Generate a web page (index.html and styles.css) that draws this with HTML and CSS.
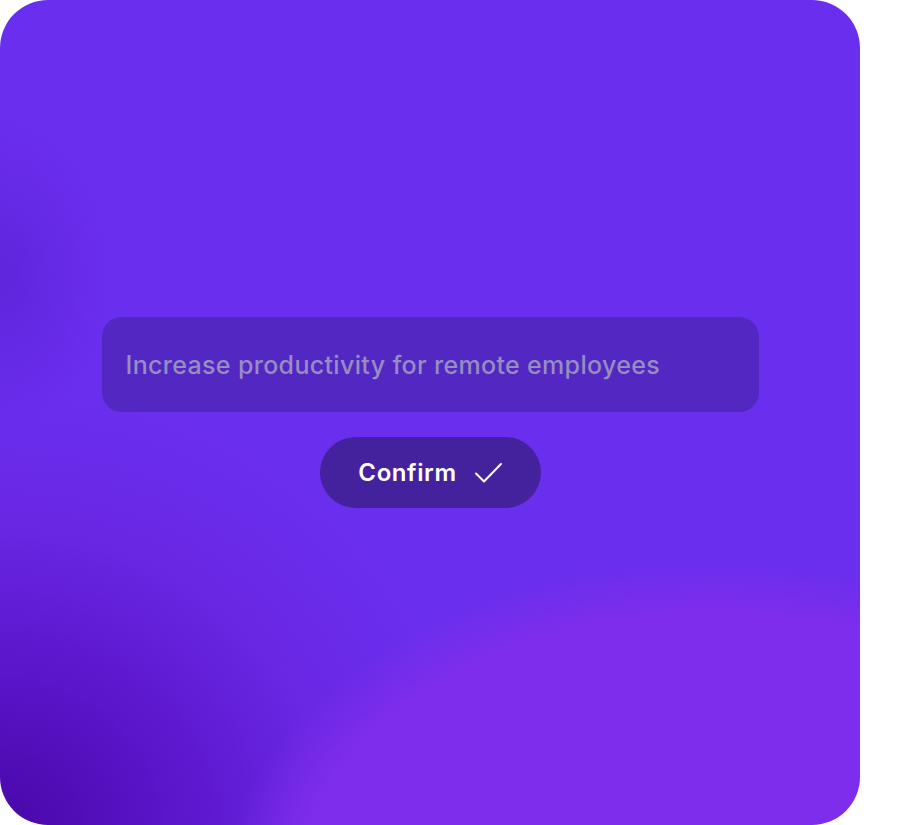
FILE: index.html
```html
<!DOCTYPE html>
<html lang="en">
<head>
<meta charset="utf-8">
<title>Goal</title>
<link rel="stylesheet" href="styles.css">
</head>
<body>
<main class="card">
  <div class="stack">
    <div class="field"><span class="placeholder">Increase productivity for remote employees</span></div>
    <button class="confirm" type="button">
      <span class="confirm-label">Confirm</span>
      <svg class="check" width="30" height="24" viewBox="0 0 30 24" fill="none" aria-hidden="true">
        <path d="M2 12.5 L10 20.5 L27 3" stroke="#ffffff" stroke-width="2" stroke-linecap="round" stroke-linejoin="round"/>
      </svg>
    </button>
  </div>
</main>
</body>
</html>
```
FILE: styles.css
```css
html, body {
  margin: 0;
  padding: 0;
  background: #ffffff;
}
body {
  width: 909px;
  height: 825px;
  font-family: "Inter", "Noto Sans", sans-serif;
}
.card {
  width: 860px;
  height: 825px;
  border-radius: 48px;
  overflow: hidden;
  display: flex;
  align-items: center;
  justify-content: center;
  background:
    radial-gradient(ellipse 490px 345px at 710px 905px, #7f2dec 0%, #7f2dec 84%, rgba(127, 45, 236, 0) 100%),
    radial-gradient(ellipse 470px 440px at 0px 830px, #4807a7 0%, rgba(86, 14, 192, 0.8) 35%, rgba(104, 28, 214, 0.4) 70%, rgba(106, 34, 224, 0) 100%),
    radial-gradient(ellipse 110px 160px at 0px 275px, rgba(80, 26, 198, 0.45) 0%, rgba(90, 36, 214, 0) 100%),
    linear-gradient(180deg, #6a2fee 0%, #6a2eee 60%, #6b2eed 100%);
}
.stack {
  display: flex;
  flex-direction: column;
  align-items: center;
  gap: 25px;
}
.field {
  box-sizing: border-box;
  width: 657px;
  height: 95px;
  border-radius: 20px;
  background: #5227c2;
  display: flex;
  align-items: center;
  padding-left: 24px;
}
.placeholder {
  color: #968dc2;
  font-size: 25px;
  font-weight: 500;
  letter-spacing: 0.33px;
}
.confirm {
  box-sizing: border-box;
  width: 221px;
  height: 71px;
  border: none;
  border-radius: 36px;
  background: #45229d;
  display: flex;
  align-items: center;
  justify-content: center;
  gap: 17px;
  padding: 0 0 0 2px;
  font-family: inherit;
  cursor: pointer;
}
.confirm-label {
  color: #ffffff;
  font-size: 24px;
  font-weight: 600;
  letter-spacing: 0.6px;
}
.check {
  display: block;
}
```
